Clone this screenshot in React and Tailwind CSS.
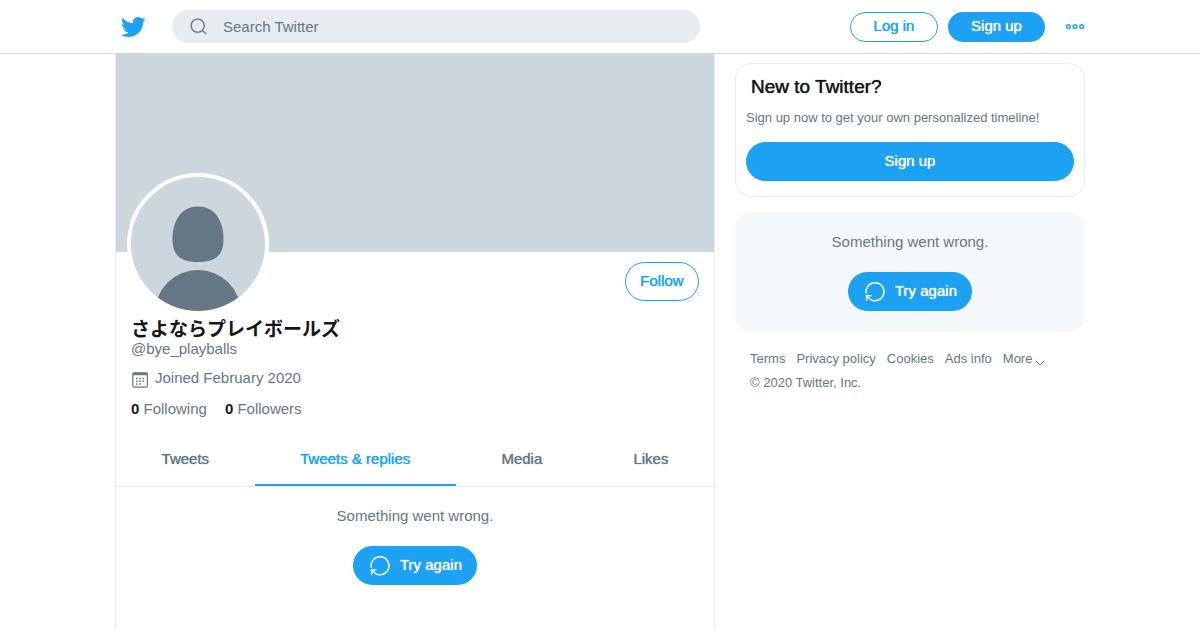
const tabs = [
  { label: "Tweets", active: false },
  { label: "Tweets & replies", active: true },
  { label: "Media", active: false },
  { label: "Likes", active: false },
];

const footerLinks = ["Terms", "Privacy policy", "Cookies", "Ads info"];

const emphasis = "[text-shadow:0_0_1px_currentColor]";

function TwitterLogo() {
  return (
    <svg viewBox="0 0 24 24" className="size-[26px] fill-[#1da1f2]" aria-hidden="true">
      <path d="M23.643 4.937c-.835.37-1.732.62-2.675.733.962-.576 1.7-1.49 2.048-2.578-.9.534-1.897.922-2.958 1.13-.85-.904-2.06-1.47-3.4-1.47-2.572 0-4.658 2.086-4.658 4.66 0 .364.042.718.12 1.06-3.873-.195-7.304-2.05-9.602-4.868-.4.69-.63 1.49-.63 2.342 0 1.616.823 3.043 2.072 3.878-.764-.025-1.482-.234-2.11-.583v.06c0 2.257 1.605 4.14 3.737 4.568-.392.106-.803.162-1.227.162-.3 0-.593-.028-.877-.082.593 1.85 2.313 3.198 4.352 3.234-1.595 1.25-3.604 1.995-5.786 1.995-.376 0-.747-.022-1.112-.065 2.062 1.323 4.51 2.093 7.14 2.093 8.57 0 13.255-7.098 13.255-13.254 0-.2-.005-.402-.014-.602.91-.658 1.7-1.477 2.323-2.41z" />
    </svg>
  );
}

function SearchIcon() {
  return (
    <svg viewBox="0 0 24 24" className="size-[19px] shrink-0 fill-[#657786]" stroke="#657786" strokeWidth="0.3" aria-hidden="true">
      <path d="M21.53 20.47l-3.66-3.66C19.195 15.24 20 13.214 20 11c0-4.97-4.03-9-9-9s-9 4.03-9 9 4.03 9 9 9c2.215 0 4.24-.804 5.808-2.13l3.66 3.66c.147.146.34.22.53.22s.385-.073.53-.22c.295-.293.295-.767.002-1.06zM3.5 11c0-4.135 3.365-7.5 7.5-7.5s7.5 3.365 7.5 7.5-3.365 7.5-7.5 7.5-7.5-3.365-7.5-7.5z" />
    </svg>
  );
}

function CalendarIcon() {
  return (
    <svg viewBox="0 0 18 18" className="mt-1 size-[18px]" fill="none" stroke="#657786" aria-hidden="true">
      <rect x="1.8" y="1.8" width="14.6" height="14.4" rx="1.5" strokeWidth="1.2" />
      <path d="M2 3h14.2" strokeWidth="2.4" />
      <path d="M5 7.5h1.6M8.3 7.5h1.6M11.6 7.5h1.6M5 10.3h1.6M8.3 10.3h1.6M11.6 10.3h1.6M5 13.1h1.6M8.3 13.1h1.6" strokeWidth="1.5" />
    </svg>
  );
}

function RetryIcon() {
  return (
    <svg viewBox="0 0 24 24" className="size-6" fill="none" stroke="#fff" strokeWidth="1.4" strokeLinecap="round" strokeLinejoin="round" aria-hidden="true">
      <path d="M3.1 13A9 9 0 1 1 8 19.8L3.8 16.2" />
      <path d="M8 15.8H3.6V20.4" />
    </svg>
  );
}

function TryAgain() {
  return (
    <div className="flex flex-col items-center gap-5">
      <p className="text-[15px] leading-5 text-[#657786]">Something went wrong.</p>
      <button className="flex h-[39px] items-center gap-2 rounded-full bg-[#1da1f2] px-[15px] text-[15px] leading-5 text-white">
        <RetryIcon />
        <span className={`pb-[2px] ${emphasis}`}>Try again</span>
      </button>
    </div>
  );
}

function Header() {
  return (
    <header className="border-b border-[#ccd6dd] bg-white">
      <div className="mx-auto flex h-[53px] max-w-[970px] items-center">
        <a href="/" aria-label="Twitter" className="ml-[5px] mr-[26px]">
          <TwitterLogo />
        </a>
        <label className="flex h-[33px] max-w-[528px] grow items-center gap-[15px] rounded-full bg-[#e6ecf0] pl-[17px] pr-4">
          <SearchIcon />
          <input
            type="text"
            aria-label="Search Twitter"
            placeholder="Search Twitter"
            className="w-full bg-transparent text-[15px] leading-5 outline-none placeholder:text-[#657786]"
          />
        </label>
        <div className="ml-auto flex items-center gap-[10px] text-[15px] leading-5">
          <button className="h-[30px] w-[88px] rounded-full border border-[#1da1f2] pb-[2px] text-[#1da1f2]">
            <span className={emphasis}>Log in</span>
          </button>
          <button className="h-[30px] w-[97px] rounded-full bg-[#1da1f2] pb-[2px] text-white">
            <span className={emphasis}>Sign up</span>
          </button>
          <button aria-label="More" className="ml-[10px]">
            <svg viewBox="0 0 20 20" className="size-5" fill="none" stroke="#1da1f2" strokeWidth="1.4" aria-hidden="true">
              <circle cx="3.4" cy="9.6" r="1.9" />
              <circle cx="10" cy="9.6" r="1.9" />
              <circle cx="16.6" cy="9.6" r="1.9" />
            </svg>
          </button>
        </div>
      </div>
    </header>
  );
}

function Avatar() {
  return (
    <svg viewBox="0 0 134 134" className="-mt-[79px] -ml-1 size-[142px] rounded-full border-4 border-white bg-[#ccd6dd] fill-[#657786]" role="img" aria-label="Profile picture">
      <clipPath id="avatar">
        <circle cx="67" cy="67" r="67" />
      </clipPath>
      <path d="M67 29.5C86 29.5 92.5 47 92.5 62C92.5 79 84 85 67 85C50 85 41.5 79 41.5 62C41.5 47 48 29.5 67 29.5Z" />
      <circle cx="67" cy="136" r="43" clipPath="url(#avatar)" />
    </svg>
  );
}

function Profile() {
  return (
    <main className="w-full max-w-[600px] border-x border-[#e6ecf0]">
      <div className="h-[198px] bg-[#ccd6dd]" />
      <div className="px-[15px]">
        <div className="flex items-start justify-between">
          <Avatar />
          <button className="mt-[10px] h-[39px] w-[74px] rounded-full border border-[#1da1f2] pb-[2px] text-[15px] leading-5 text-[#1da1f2]">
            <span className={emphasis}>Follow</span>
          </button>
        </div>
        <h1 className="mt-[5px] text-[19px] leading-[19px] font-bold text-[#14171a]">さよならプレイボールズ</h1>
        <p className="text-[15px] leading-5 text-[#657786]">@bye_playballs</p>
        <p className="mt-2 flex items-center gap-[6px] text-[15px] leading-5 text-[#657786]">
          <CalendarIcon />
          Joined February 2020
        </p>
        <div className="mt-[10px] flex gap-[18px] text-[15px] leading-5 text-[#657786]">
          <a href="/following">
            <b className="text-[#14171a]">0</b> Following
          </a>
          <a href="/followers">
            <b className="text-[#14171a]">0</b> Followers
          </a>
        </div>
      </div>
      <nav className="mt-[15px] flex border-b border-[#e6ecf0] text-[15px] leading-5">
        {tabs.map((tab) => (
          <a
            key={tab.label}
            href="#"
            className={
              tab.active
                ? "flex h-[52px] grow items-center justify-center border-b-2 border-[#1da1f2] text-[#1da1f2]"
                : "flex h-[52px] grow items-center justify-center border-b-2 border-transparent text-[#657786]"
            }
          >
            <span className={emphasis}>{tab.label}</span>
          </a>
        ))}
      </nav>
      <div className="pt-[19px] pb-[45px]">
        <TryAgain />
      </div>
    </main>
  );
}

function Sidebar() {
  return (
    <aside className="w-[350px] shrink-0 pt-[9px]">
      <section className="rounded-2xl border border-[#e6ecf0] px-[10px] pt-[11px] pb-[15px]">
        <h2 className={`px-[5px] text-[19px] leading-6 text-[#14171a] ${emphasis}`}>New to Twitter?</h2>
        <p className="mt-[9px] text-[13px] leading-5 text-[#657786]">
          Sign up now to get your own personalized timeline!
        </p>
        <button className="mt-[14px] h-[39px] w-full rounded-full bg-[#1da1f2] pb-[2px] text-[15px] leading-5 text-white">
          <span className={emphasis}>Sign up</span>
        </button>
      </section>
      <section className="mt-[15px] rounded-2xl bg-[#f5f8fa] pt-5 pb-[21px]">
        <TryAgain />
      </section>
      <footer className="mt-[15px] px-[15px] text-[13px] leading-6 text-[#657786]">
        <nav className="flex gap-[11px]">
          {footerLinks.map((link) => (
            <a key={link} href="#">
              {link}
            </a>
          ))}
          <button className="flex items-center gap-[3px]">
            More
            <svg viewBox="0 0 10 10" className="mt-2 size-[10px]" fill="none" stroke="#657786" aria-hidden="true">
              <path d="M1 3L5 7L9 3" />
            </svg>
          </button>
        </nav>
        <p>© 2020 Twitter, Inc.</p>
      </footer>
    </aside>
  );
}

function App() {
  return (
    <div className="min-h-screen bg-white font-['Liberation_Sans','Noto_Sans_CJK_JP',sans-serif]">
      <Header />
      <div className="mx-auto flex min-h-[calc(100vh-54px)] max-w-[970px] justify-between gap-5">
        <Profile />
        <Sidebar />
      </div>
    </div>
  );
}

export default App;
